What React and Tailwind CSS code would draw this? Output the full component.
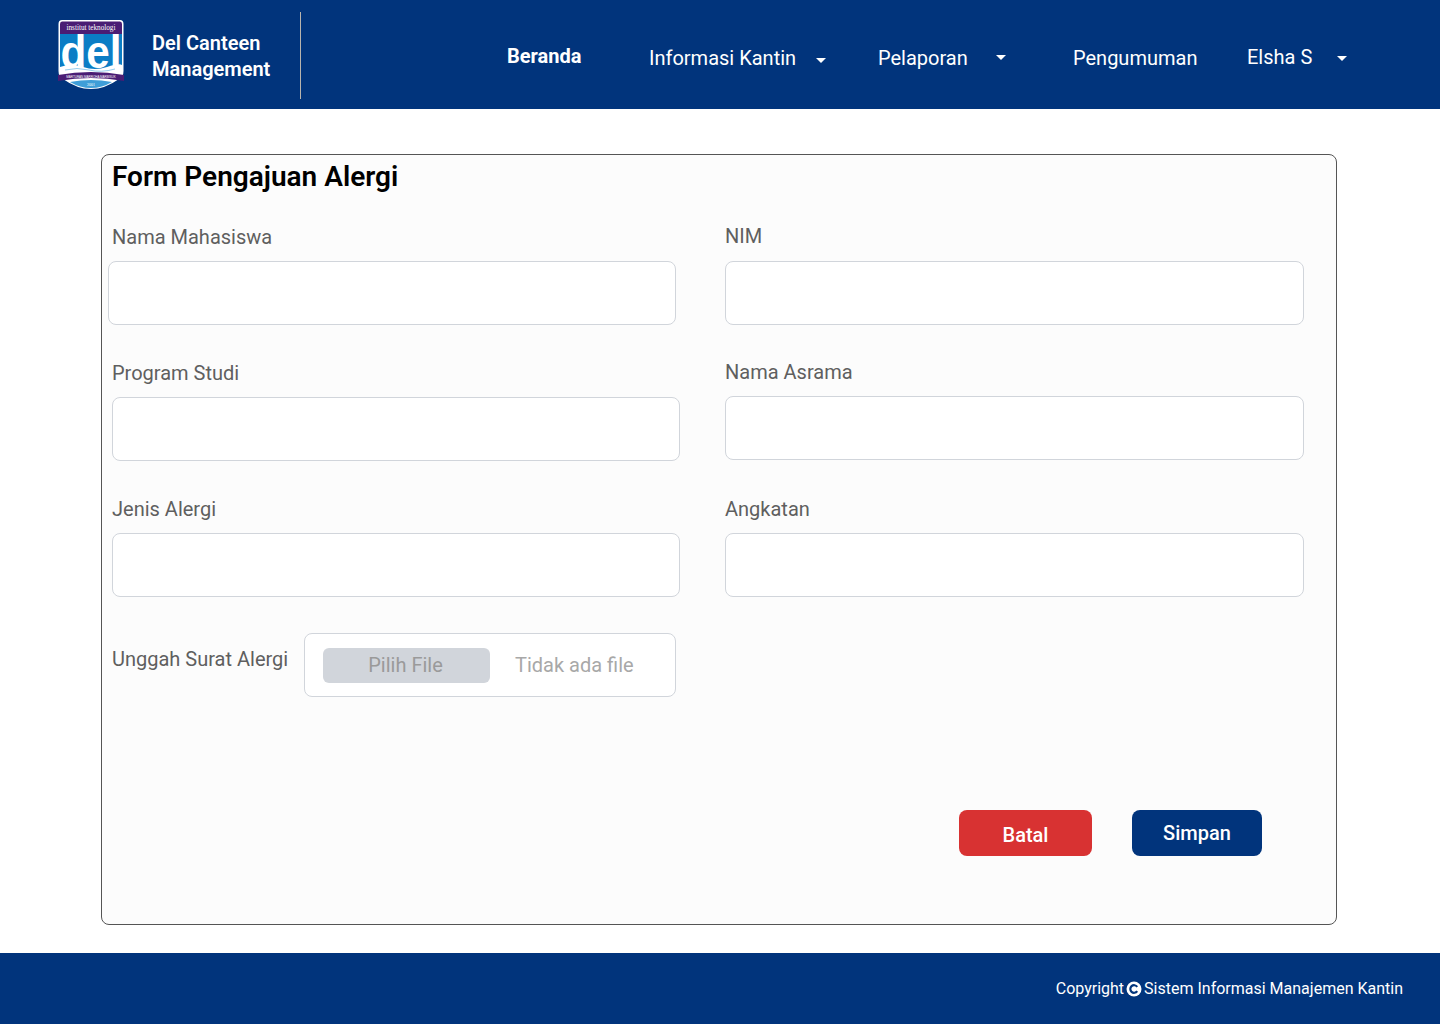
import React from "react";

// shield logo, drawn by hand
function DelLogo() {
  return (
    <svg width="68" height="72" viewBox="0 0 68 72" className="shrink-0">
      <path d="M5 1 H63 Q66.500 1 66.500 5 V52 Q66.500 58 62 60 Q48 70 34 70 Q20 70 6 60 Q1.500 58 1.500 52 V5 Q1.500 1 5 1 Z" fill="#ffffff" />
      <path d="M5 2.500 H63 Q65 2.500 65 5 V15 H3 V5 Q3 2.500 5 2.500 Z" fill="#4a1d74" />
      <rect x="3" y="15" width="62" height="38" fill="#0b7dc5" />
      <text x="34" y="11" textAnchor="middle" fontFamily="Liberation Serif, serif" fontSize="7.200" fill="#ffffff">institut teknologi</text>
      <text x="34" y="49" textAnchor="middle" fontFamily="Liberation Sans, sans-serif" fontWeight="700" fontSize="46" textLength="61" lengthAdjust="spacingAndGlyphs" fill="#ffffff">del</text>
      <path d="M3 48 Q14 44 26 48 T50 48 T65 46 V56 H3 Z" fill="#ffffff" />
      <path d="M8 51 Q20 48 32 51 T58 50" fill="none" stroke="#7cc0e8" strokeWidth="0.800" />
      <path d="M1 56 Q34 50 67 56 V62 Q34 56 1 62 Z" fill="#4a1d74" />
      <text x="34" y="58.500" textAnchor="middle" fontFamily="Liberation Sans, sans-serif" fontSize="3" fill="#ffffff">MARTURAN MARROHA MARBISUK</text>
      <path d="M13 63 Q34 59 55 63 Q45 69 34 69 Q23 69 13 63 Z" fill="#3f9ed8" />
      <text x="34" y="66.500" textAnchor="middle" fontFamily="Liberation Serif, serif" fontSize="4" fill="#ffffff">2001</text>
    </svg>
  );
}

function Caret() {
  return <span className="inline-block w-0 h-0 border-x-[5px] border-x-transparent border-t-[5px] border-t-white" />;
}

function Field({ label, className = "", labelClass = "", inputClass = "" }) {
  return (
    <div className={className}>
      <div className={`text-[20px] leading-6 text-[#5f5f5f] ${labelClass}`}>{label}</div>
      <input className={`block h-16 rounded-lg border border-[#d1d5db] bg-white ${inputClass}`} />
    </div>
  );
}

export default function App() {
  return (
    <div className="min-h-[1024px] flex flex-col bg-white font-['Roboto',sans-serif]">
      {/* HEADER */}
      <header className="h-[109px] bg-[#01347c] flex items-center text-white">
        <div className="ml-[57px] mt-[1px]">
          <DelLogo />
        </div>
        <div className="ml-[27px] text-[20px] leading-[26px] font-semibold mt-[3px] w-[148px]">
          Del Canteen
          <br />
          Management
        </div>
        <div className="w-px h-[87px] bg-[#b9b4ad] mt-[2px]" />

        <nav className="flex items-center text-[20px] leading-6">
          <span className="ml-[206px] font-bold mt-[3px] w-[142px]">Beranda</span>
          <span className="w-[147px] whitespace-nowrap mt-[7px]">Informasi Kantin</span>
          <span className="ml-[20px] mt-[11px] flex"><Caret /></span>
          <span className="ml-[52px] w-[90px] whitespace-nowrap mt-[7px]">Pelaporan</span>
          <span className="ml-[28px] mt-[5px] flex"><Caret /></span>
          <span className="ml-[67px] w-[125px] whitespace-nowrap mt-[7px]">Pengumuman</span>
          <span className="ml-[49px] w-[66px] whitespace-nowrap mt-[5px]">Elsha S</span>
          <span className="ml-[24px] mt-[7px] flex"><Caret /></span>
        </nav>
      </header>

      {/* FORM CARD */}
      <main className="flex-1 pt-[45px]">
        <div className="ml-[101px] w-[1236px] h-[771px] rounded-lg border border-[#555555] bg-[#fcfcfc]">
          <h1 className="ml-[10px] mt-[6px] text-[28px] leading-8 font-semibold text-black">Form Pengajuan Alergi</h1>

          <div className="flex">
            <div className="ml-[10px] w-[568px] pt-[32px]">
              <Field label="Nama Mahasiswa" labelClass="mb-3" inputClass="w-[568px] -ml-1" />
              <Field label="Program Studi" className="mt-9" labelClass="mb-3" inputClass="w-[568px]" />
              <Field label="Jenis Alergi" className="mt-9" labelClass="mb-3" inputClass="w-[568px]" />
              <div className="mt-9 flex">
                <div className="text-[20px] leading-6 text-[#5f5f5f] w-[192px] mt-[14px] whitespace-nowrap">Unggah Surat Alergi</div>
                <div className="w-[372px] h-16 rounded-lg border border-[#d1d5db] bg-white flex items-center pl-[18px]">
                  <div className="w-[167px] h-[35px] pr-[2px] rounded-md bg-[#d1d5db] text-[#9a9a9a] text-[20px] flex items-center justify-center">Pilih File</div>
                  <div className="ml-[25px] text-[20px] text-[#a8a8a8]">Tidak ada file</div>
                </div>
              </div>
            </div>

            <div className="ml-[45px] w-[579px] pt-[31px]">
              <Field label="NIM" labelClass="mb-[13px]" inputClass="w-[579px]" />
              <Field label="Nama Asrama" className="mt-[35px]" labelClass="mb-3" inputClass="w-[579px]" />
              <Field label="Angkatan" className="mt-[37px]" labelClass="mb-3" inputClass="w-[579px]" />
            </div>
          </div>

          <div className="mt-[113px] pr-[74px] flex justify-end gap-10">
            <button className="w-[133px] h-[46px] pt-[3px] rounded-lg bg-[#d83232] text-white text-[20px] font-medium">Batal</button>
            <button className="w-[130px] h-[46px] pb-[1px] rounded-lg bg-[#01347c] text-white text-[20px] font-medium">Simpan</button>
          </div>
        </div>
      </main>

      {/* FOOTER */}
      <footer className="h-[71px] bg-[#01347c] flex items-center justify-end pr-[37px] text-white text-[16px]">
        <span className="mt-[1px]">Copyright</span>
        <svg width="16" height="16" viewBox="0 0 16 16" className="mx-[2px]">
          <circle cx="8" cy="8" r="7.500" fill="#ffffff" />
          <path d="M11.200 5.800 A3.800 3.800 0 1 0 11.200 10.200" fill="none" stroke="#01347c" strokeWidth="2.200" />
        </svg>
        <span className="mt-[1px]">Sistem Informasi Manajemen Kantin</span>
      </footer>
    </div>
  );
}
